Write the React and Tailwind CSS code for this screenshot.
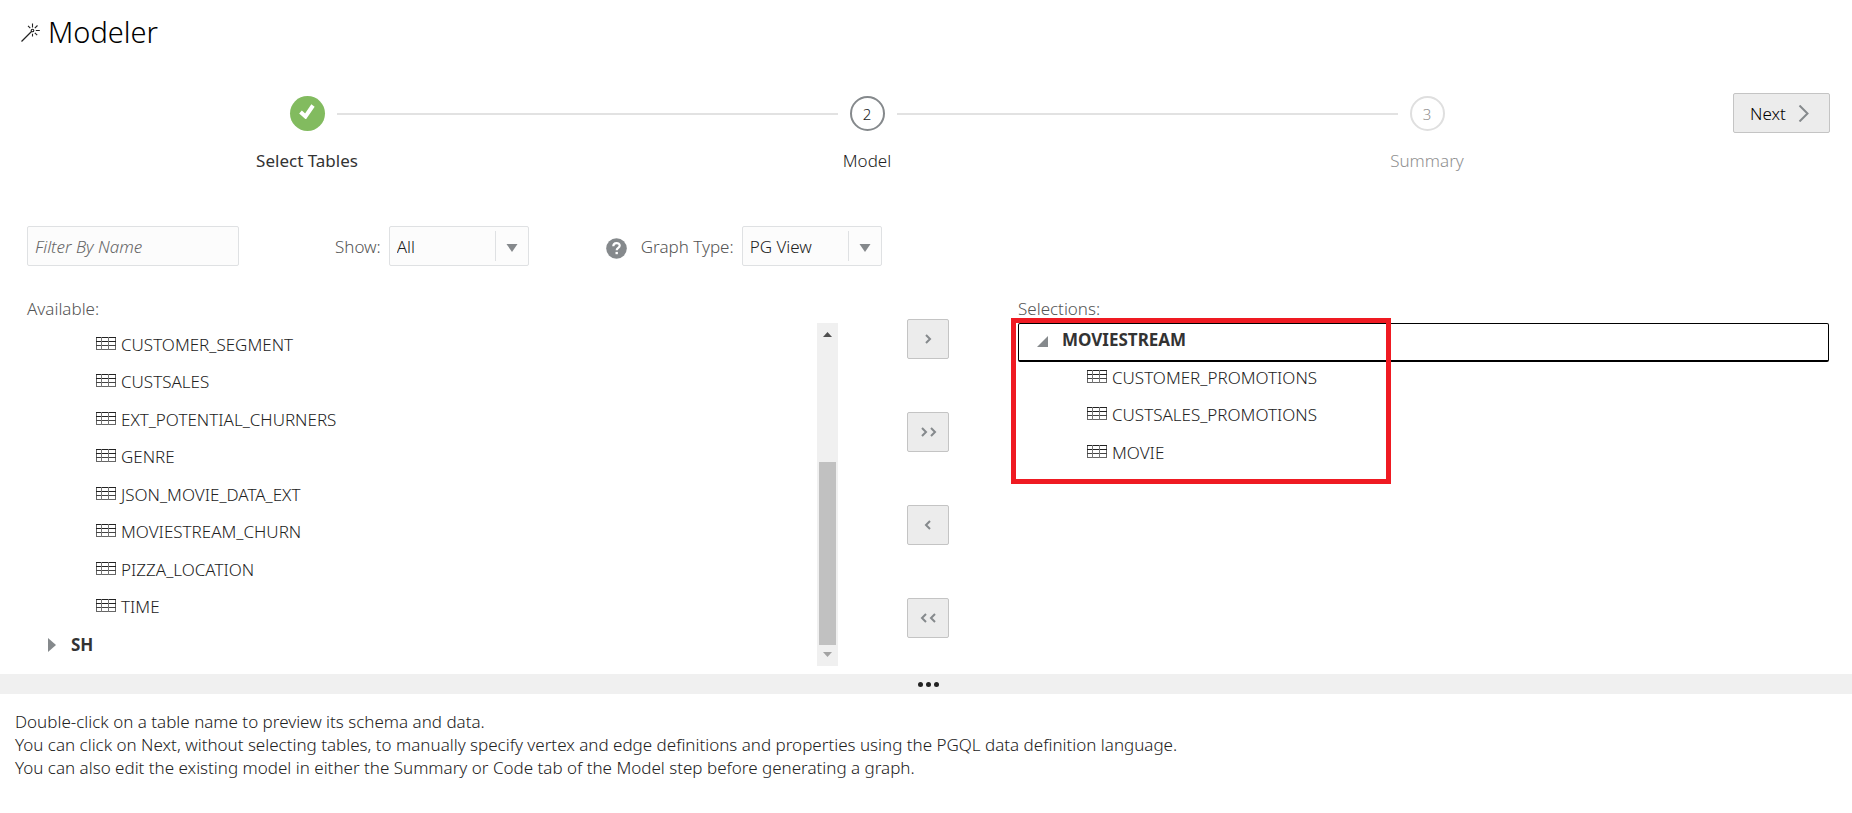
const available = [
  "CUSTOMER_SEGMENT",
  "CUSTSALES",
  "EXT_POTENTIAL_CHURNERS",
  "GENRE",
  "JSON_MOVIE_DATA_EXT",
  "MOVIESTREAM_CHURN",
  "PIZZA_LOCATION",
  "TIME",
];
const selected = ["CUSTOMER_PROMOTIONS", "CUSTSALES_PROMOTIONS", "MOVIE"];
const moves = [
  { label: "Move selected to the right", text: ">", paths: ["M2 1l4 4-4 4"] },
  { label: "Move all to the right", text: ">>", paths: ["M2 1l4 4-4 4", "M11 1l4 4-4 4"] },
  { label: "Move selected to the left", text: "<", paths: ["M6 1l-4 4 4 4"] },
  { label: "Move all to the left", text: "<<", paths: ["M6 1l-4 4 4 4", "M15 1l-4 4 4 4"] },
];

function TableIcon() {
  return (
    <svg className="mb-[2px] shrink-0" width="20" height="13" viewBox="0 0 20 13" fill="none" stroke="#333" shapeRendering="crispEdges">
      <rect x="0.5" y="0.5" width="19" height="12" stroke="#666" />
      <path d="M0 0.5h20M0 4.5h20" stroke="#222" />
      <path d="M0 8.5h20" stroke="#444" />
      <path d="M5.5 0v13M12.5 0v13" stroke="#777" />
    </svg>
  );
}

function TableRow({ name }) {
  return (
    <li className="flex h-[38px] items-center gap-[5px] pl-[69px] even:h-[37px]">
      <TableIcon />
      <span>{name}</span>
    </li>
  );
}

function WandIcon() {
  return (
    <svg width="20" height="20" viewBox="0 0 20 20" fill="none" stroke="#222" strokeWidth="1.1">
      <path d="M0.500 19.500L10.500 9.500" strokeWidth="1.3" />
      <circle cx="11.500" cy="8.500" r="1.300" />
      <path d="M11.500 1.500v4M11.500 11.800v2.700M14.800 8.500h4M13.800 6.200l2.700-2.700M9.300 6.200L7 3.900M13.800 10.800l2.400 2.400" />
    </svg>
  );
}

function Select({ id, value, options }) {
  return (
    <div className="relative w-[140px]">
      <select
        id={id}
        defaultValue={value}
        className="block h-10 w-full appearance-none rounded-[2px] border border-[#dfe1e3] bg-[#fcfcfc] pl-[7px] pr-9 text-[#222]"
      >
        {options.map((o) => (
          <option key={o}>{o}</option>
        ))}
      </select>
      <span className="pointer-events-none absolute inset-y-[5px] right-0 flex w-[34px] items-center justify-center border-l border-[#dfe1e3]">
        <svg className="mt-1" width="12" height="8" viewBox="0 0 12 8">
          <path d="M0.500 0h11L6 8z" fill="#85898c" />
        </svg>
      </span>
    </div>
  );
}

const steps = [
  { n: 1, label: "Select Tables", state: "done" },
  { n: 2, label: "Model", state: "current" },
  { n: 3, label: "Summary", state: "todo" },
];
const circleStyles = {
  done: "bg-[#82bb5f] text-white",
  current: "border-2 border-[#85898c] text-[#222]",
  todo: "border-2 border-[#dfdfdf] text-[#909090]",
};
const labelStyles = {
  done: "font-normal text-[#333]",
  current: "text-[#222]",
  todo: "text-[#909090]",
};

function Stepper() {
  return (
    <ol className="grid flex-1 grid-cols-3 pt-[3px]">
      {steps.map((s, i) => (
        <li key={s.n} className="flex flex-col items-center">
          <div className="flex w-full items-center gap-3">
            <span className={i === 0 ? "flex-1" : "h-[2px] flex-1 bg-[#e2e2e2]"} />
            <span className={"flex h-[35px] w-[35px] items-center justify-center rounded-full text-[15px] leading-none " + circleStyles[s.state]}>
              {s.state === "done" ? (
                <svg className="mb-1" width="16" height="15" viewBox="0 0 16 15" fill="none" stroke="#fff" strokeWidth="4">
                  <path d="M1.500 8l5 4.500L14 1.500" />
                </svg>
              ) : (
                <span className="pt-[2px]">{s.n}</span>
              )}
            </span>
            <span className={i === 2 ? "flex-1" : "h-[2px] flex-1 bg-[#e2e2e2]"} />
          </div>
          <span className={"mt-[18px] leading-6 " + labelStyles[s.state]}>{s.label}</span>
        </li>
      ))}
    </ol>
  );
}

export default function App() {
  return (
    <main className="min-h-screen bg-white font-['Noto_Sans','Open_Sans',sans-serif] text-[17px] font-light leading-[23px] text-[#222]">
      <header className="flex items-center gap-[7px] pl-[21px] pt-3">
        <WandIcon />
        <h1 className="text-[29px] leading-10 text-black">Modeler</h1>
      </header>

      <section className="flex items-start pl-[27px] pr-[22px] pt-[41px]">
        <Stepper />
        <div className="flex w-[123px] justify-end">
          <button className="flex h-10 w-[97px] items-center justify-between rounded-[2px] border border-[#c4c4c4] bg-[#ececec] pl-4 pr-5 text-black">
            Next
            <svg width="11" height="17" viewBox="0 0 11 17" fill="none" stroke="#85898c" strokeWidth="2">
              <path d="M1.500 0.500l8 8-8 8" />
            </svg>
          </button>
        </div>
      </section>

      <section className="flex items-center px-[27px] pt-[53px] text-[#555]">
        <input
          type="text"
          aria-label="Filter By Name"
          placeholder="Filter By Name"
          className="h-10 w-[212px] rounded-[2px] border border-[#dfe1e3] bg-[#fcfcfc] px-[7px] placeholder:italic placeholder:text-[#666]"
        />
        <div className="ml-24 flex items-center gap-2">
          <label htmlFor="show">Show:</label>
          <Select id="show" value="All" options={["All", "Tables", "Views"]} />
        </div>
        <div className="ml-[77px] flex items-center gap-2">
          <svg className="mr-[6px] mt-1" width="21" height="21" viewBox="0 0 21 21" fill="none">
            <circle cx="10.500" cy="10.500" r="10.300" fill="#85898c" />
            <path d="M7.300 8.200c0-4.200 6.400-4 6.400-.6 0 2.300-3 2.300-3 4.700" stroke="#fff" strokeWidth="2.200" />
            <path d="M9.500 13.900h2.400v2.300H9.500z" fill="#fff" />
          </svg>
          <label htmlFor="graph-type">Graph Type:</label>
          <Select id="graph-type" value="PG View" options={["PG View", "PG Objects"]} />
        </div>
      </section>

      <section className="grid grid-cols-[1fr_180px_1fr] pl-[27px] pr-[23px] pt-[31px]">
        <div>
          <h2 className="h-[26px] text-[#555]">Available:</h2>
          <div className="flex h-[343px] overflow-hidden">
            <ul className="flex-1 pt-[2px]">
              {available.map((t) => (
                <TableRow key={t} name={t} />
              ))}
              <li className="flex h-[38px] items-center gap-[15px] pl-[21px]">
                <svg className="mt-[2px]" width="8" height="14" viewBox="0 0 8 14">
                  <path d="M0 0l8 7-8 7z" fill="#85898c" />
                </svg>
                <span className="font-bold text-[#333]">SH</span>
              </li>
            </ul>
            <div className="flex w-[21px] flex-col items-center bg-[#f0f0f0]">
              <svg className="mt-[9px]" width="9" height="5" viewBox="0 0 9 5">
                <path d="M0 5h9L4.500 0z" fill="#505050" />
              </svg>
              <div className="mt-[125px] w-[17px] flex-1 bg-[#c1c1c1]" />
              <svg className="mb-[9px] mt-[7px]" width="9" height="5" viewBox="0 0 9 5">
                <path d="M0 0h9L4.500 5z" fill="#a3a3a3" />
              </svg>
            </div>
          </div>
        </div>

        <div className="flex flex-col items-center gap-[53px] pt-[22px]">
          {moves.map((m) => (
            <button key={m.text} aria-label={m.label} className="flex h-10 w-[42px] items-center justify-center rounded-[2px] border border-[#c4c4c4] bg-[#ececec]">
              <svg width={m.paths.length > 1 ? 17 : 8} height="10" viewBox={m.paths.length > 1 ? "0 0 17 10" : "0 0 8 10"} fill="none" stroke="#85898c" strokeWidth="2">
                {m.paths.map((d) => (
                  <path key={d} d={d} />
                ))}
              </svg>
            </button>
          ))}
        </div>

        <div>
          <h2 className="h-[26px] text-[#555]">Selections:</h2>
          <div className="relative">
            <div className="flex h-[39px] items-center gap-[14px] rounded-[2px] border border-b-2 border-black pb-[5px] pl-[18px]">
              <svg className="mt-[4px]" width="11" height="11" viewBox="0 0 11 11">
                <path d="M0 11h11V0z" fill="#85898c" />
              </svg>
              <span className="font-bold text-[#333]">MOVIESTREAM</span>
            </div>
            <ul className="-mt-1">
              {selected.map((t) => (
                <TableRow key={t} name={t} />
              ))}
            </ul>
            <div className="pointer-events-none absolute -left-[7px] -top-[5px] h-[166px] w-[380px] border-[5px] border-[#ef1a22]" />
          </div>
        </div>
      </section>

      <div className="mt-2 flex h-5 items-center justify-center gap-[3px] bg-[#f0f0f0] pl-1" role="separator">
        {[0, 1, 2].map((i) => (
          <span key={i} className="h-[5px] w-[5px] rounded-full bg-[#222]" />
        ))}
      </div>

      <p className="pl-[15px] pt-4">
        Double-click on a table name to preview its schema and data.
        <br />
        You can click on Next, without selecting tables, to manually specify vertex and edge definitions and properties using the PGQL data definition language.
        <br />
        You can also edit the existing model in either the Summary or Code tab of the Model step before generating a graph.
      </p>
    </main>
  );
}
